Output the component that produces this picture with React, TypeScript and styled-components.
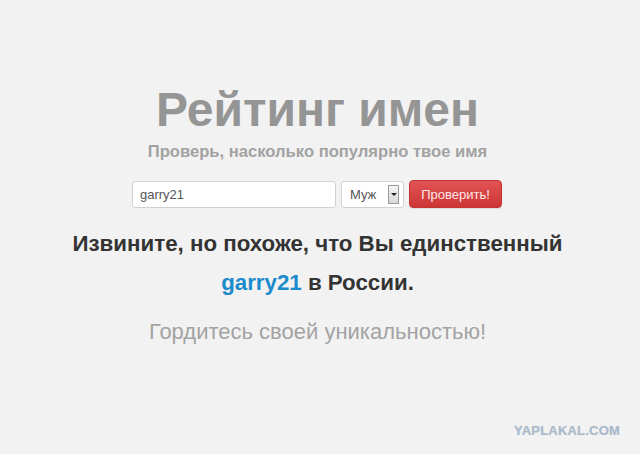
import { createGlobalStyle } from "styled-components";
import styled from "styled-components";

////////////////////////////////////////////////////////////////////// Global

const Global = createGlobalStyle`
  html, body {
    margin: 0;
    padding: 0;
    background: #f2f2f2;
  }
  body {
    font-family: "Liberation Sans", Arial, sans-serif;
  }
`;

////////////////////////////////////////////////////////////////////// Layout

const Page = styled.div`
  position: relative;
  width: 640px;
  height: 454px;
  overflow: hidden;
  display: flex;
  flex-direction: column;
  align-items: center;
  padding: 82px 5px 0 0;
  box-sizing: border-box;
`;

const Title = styled.h1`
  margin: 0;
  font-size: 48px;
  line-height: 56px;
  font-weight: 700;
  color: #959595;
`;

const Subtitle = styled.h2`
  margin: 4px 0 0;
  font-size: 16.6px;
  line-height: 20px;
  font-weight: 700;
  color: #a2a2a2;
`;

const Form = styled.form`
  display: flex;
  align-items: center;
  gap: 5px;
  margin-top: 18px;
  margin-right: 1px;
`;

const Input = styled.input`
  width: 204px;
  height: 27px;
  box-sizing: border-box;
  border: 1px solid #d2d2d2;
  border-radius: 3px;
  background: #fff;
  padding: 0 7px;
  font-family: "Liberation Sans", Arial, sans-serif;
  font-size: 13px;
  color: #555;
  outline: none;
`;

const Select = styled.div`
  width: 63px;
  height: 27px;
  box-sizing: border-box;
  border: 1px solid #d2d2d2;
  border-radius: 3px;
  background: #fff;
  display: flex;
  align-items: center;
  justify-content: space-between;
  padding: 0 4px 0 8px;
  font-size: 13px;
  color: #555;
`;

const ArrowBox = styled.span`
  width: 11px;
  height: 19px;
  box-sizing: border-box;
  border: 1px solid #9a9a9a;
  background: linear-gradient(#f4f4f4, #d8d8d8);
  display: flex;
  align-items: center;
  justify-content: center;

  &::after {
    content: "";
    border-left: 3px solid transparent;
    border-right: 3px solid transparent;
    border-top: 3px solid #222;
  }
`;

const Button = styled.button`
  width: 93px;
  height: 28px;
  border: 1px solid #c23434;
  border-radius: 4px;
  background: linear-gradient(#e25454, #cc3535);
  color: #fde6e6;
  font-family: "Liberation Sans", Arial, sans-serif;
  font-size: 13px;
  padding: 0;
  box-shadow: 0 1px 1px rgba(0, 0, 0, 0.1);
`;

const Message = styled.p`
  margin: 16px 0 0;
  font-size: 22.3px;
  line-height: 39px;
  font-weight: 700;
  color: #333;
  text-align: center;
`;

const Name = styled.span`
  color: #1c8bcb;
`;

const Proud = styled.p`
  margin: 16px 0 0;
  font-size: 22px;
  line-height: 28px;
  color: #a3a3a3;
`;

const Watermark = styled.div`
  position: absolute;
  right: 20px;
  bottom: 16px;
  font-size: 13px;
  font-weight: 700;
  letter-spacing: 0.2px;
  color: #abbacb;
  text-shadow: 0 0 1px #c8d3de;
`;

//////////////////////////////////////////////////////////////////////

export default function App() {
  return (
    <Page>
      <Global />
      <Title>Рейтинг имен</Title>
      <Subtitle>Проверь, насколько популярно твое имя</Subtitle>
      <Form onSubmit={(e) => e.preventDefault()}>
        <Input defaultValue="garry21" />
        <Select>
          Муж
          <ArrowBox />
        </Select>
        <Button type="submit">Проверить!</Button>
      </Form>
      <Message>
        Извините, но похоже, что Вы единственный
        <br />
        <Name>garry21</Name> в России.
      </Message>
      <Proud>Гордитесь своей уникальностью!</Proud>
      <Watermark>YAPLAKAL.COM</Watermark>
    </Page>
  );
}
